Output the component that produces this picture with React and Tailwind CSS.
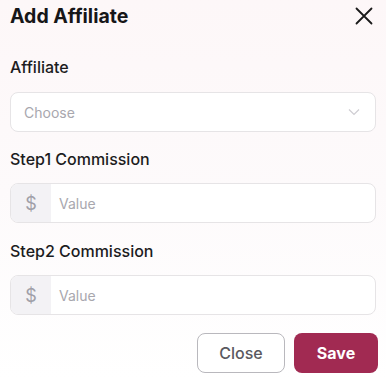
import React from "react";

function Field({ label, children }) {
  return (
    <div className="flex flex-col">
      <div className="text-[16px] font-medium text-[#1c1c1e] leading-[20px] h-[20px]">{label}</div>
      {children}
    </div>
  );
}

function MoneyInput() {
  return (
    <div className="mt-[14px] flex h-[40px] rounded-[8px] border border-[#e6e4e6] bg-white overflow-hidden">
      <div className="w-[40px] flex items-center justify-center bg-[#f3f2f5] text-[#a09fa8] text-[18px]">$</div>
      <div className="flex items-center pl-[8px] text-[14px] text-[#a8a7ae]">Value</div>
    </div>
  );
}

export default function App() {
  return (
    <div
      className="w-[386px] h-[380px] bg-gradient-to-b from-[#fdf7f8] via-[#fdfafb] to-white px-[10px] pt-[4px]"
      style={{ fontFamily: "Inter, 'Noto Sans', sans-serif" }}
    >
      <div className="flex items-center justify-between h-[24px]">
        <div className="text-[19.5px] font-bold text-[#161618] leading-[24px]">Add Affiliate</div>
        <svg width="18" height="18" viewBox="0 0 18 18" className="mr-[3px]">
          <path d="M1.5 1.5 L16.5 16.5 M16.5 1.5 L1.5 16.5" stroke="#1a1a1a" strokeWidth="1.8" strokeLinecap="round" />
        </svg>
      </div>

      <div className="mt-[29px]">
        <Field label="Affiliate">
          <div className="mt-[15px] flex h-[40px] items-center justify-between rounded-[8px] border border-[#e6e4e6] bg-white pl-[13px] pr-[15px]">
            <span className="text-[14px] text-[#a8a7ae]">Choose</span>
            <svg width="12" height="8" viewBox="0 0 12 8">
              <path d="M1 1.5 L6 6.5 L11 1.5" stroke="#cfcdd2" strokeWidth="1.2" fill="none" />
            </svg>
          </div>
        </Field>
      </div>

      <div className="mt-[17px]">
        <Field label="Step1 Commission">
          <MoneyInput />
        </Field>
      </div>

      <div className="mt-[18px]">
        <Field label="Step2 Commission">
          <MoneyInput />
        </Field>
      </div>

      <div className="mt-[18px] flex justify-end gap-[9px] mr-[-2px]">
        <button className="w-[88px] h-[40px] rounded-[8px] border border-[#b9b8bd] bg-white text-[16px] font-medium text-[#5a5960]">
          Close
        </button>
        <button className="w-[84px] h-[40px] rounded-[8px] bg-[#a12a52] text-[16px] font-bold text-white">
          Save
        </button>
      </div>
    </div>
  );
}
